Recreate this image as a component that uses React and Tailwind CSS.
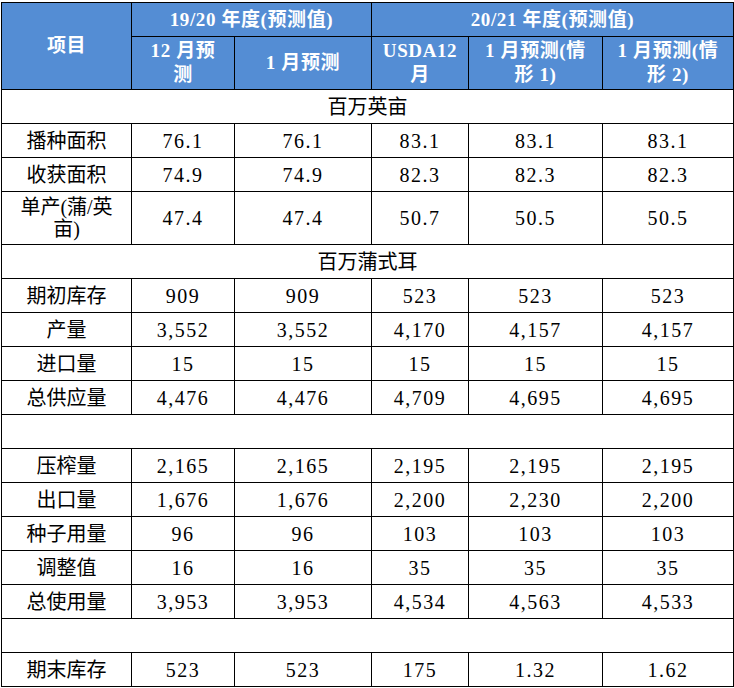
import React from 'react'

const blocks = [
  { unit: '百万英亩' },
  { rows: [
    ['播种面积', '76.1', '76.1', '83.1', '83.1', '83.1'],
    ['收获面积', '74.9', '74.9', '82.3', '82.3', '82.3'],
    [<>单产(蒲/英<br />亩)</>, '47.4', '47.4', '50.7', '50.5', '50.5'],
  ] },
  { unit: '百万蒲式耳' },
  { rows: [
    ['期初库存', '909', '909', '523', '523', '523'],
    ['产量', '3,552', '3,552', '4,170', '4,157', '4,157'],
    ['进口量', '15', '15', '15', '15', '15'],
    ['总供应量', '4,476', '4,476', '4,709', '4,695', '4,695'],
  ] },
  { unit: '' },
  { rows: [
    ['压榨量', '2,165', '2,165', '2,195', '2,195', '2,195'],
    ['出口量', '1,676', '1,676', '2,200', '2,230', '2,200'],
    ['种子用量', '96', '96', '103', '103', '103'],
    ['调整值', '16', '16', '35', '35', '35'],
    ['总使用量', '3,953', '3,953', '4,534', '4,563', '4,533'],
  ] },
  { unit: '' },
  { rows: [
    ['期末库存', '523', '523', '175', '1.32', '1.62'],
  ] },
]

const Head = ({ className = '', children }) => (
  <div className={`bg-[#548dd4] text-white font-bold text-[19px] tracking-[0.6px] flex items-center justify-center text-center leading-[24px] ${className}`}>
    {children}
  </div>
)

const Cell = ({ className = '', children }) => (
  <div className={`bg-white flex items-center justify-center text-center leading-[22px] ${className}`}>
    {children}
  </div>
)

export default function App() {
  return (
    <div className="bg-white w-[734px] h-[688px] pt-[2px] pl-[1px] font-['Liberation_Serif','Noto_Sans_CJK_SC',serif] text-[20px] text-black">
      <div className="grid w-[733px] bg-black p-px gap-px grid-cols-[129px_102px_136px_96px_133px_130px] grid-rows-[33px_52px_33px_33px_33px_52px_33px_33px_33px_33px_33px_33px_33px_33px_33px_33px_33px_33px_33px]">
        {/* header */}
        <Head className="row-span-2">项目</Head>
        <Head className="col-span-2">19/20 年度(预测值)</Head>
        <Head className="col-span-3">20/21 年度(预测值)</Head>
        <Head>12 月预<br />测</Head>
        <Head>1 月预测</Head>
        <Head>USDA12<br />月</Head>
        <Head>1 月预测(情<br />形 1)</Head>
        <Head>1 月预测(情<br />形 2)</Head>

        {blocks.map((b, i) =>
          b.rows ? (
            b.rows.map((row, j) =>
              row.map((v, k) => (
                <Cell key={`${i}-${j}-${k}`} className={k > 0 ? 'tracking-[1.5px]' : ''}>{v}</Cell>
              ))
            )
          ) : (
            <Cell key={i} className="col-span-6">{b.unit}</Cell>
          )
        )}
      </div>
    </div>
  )
}
